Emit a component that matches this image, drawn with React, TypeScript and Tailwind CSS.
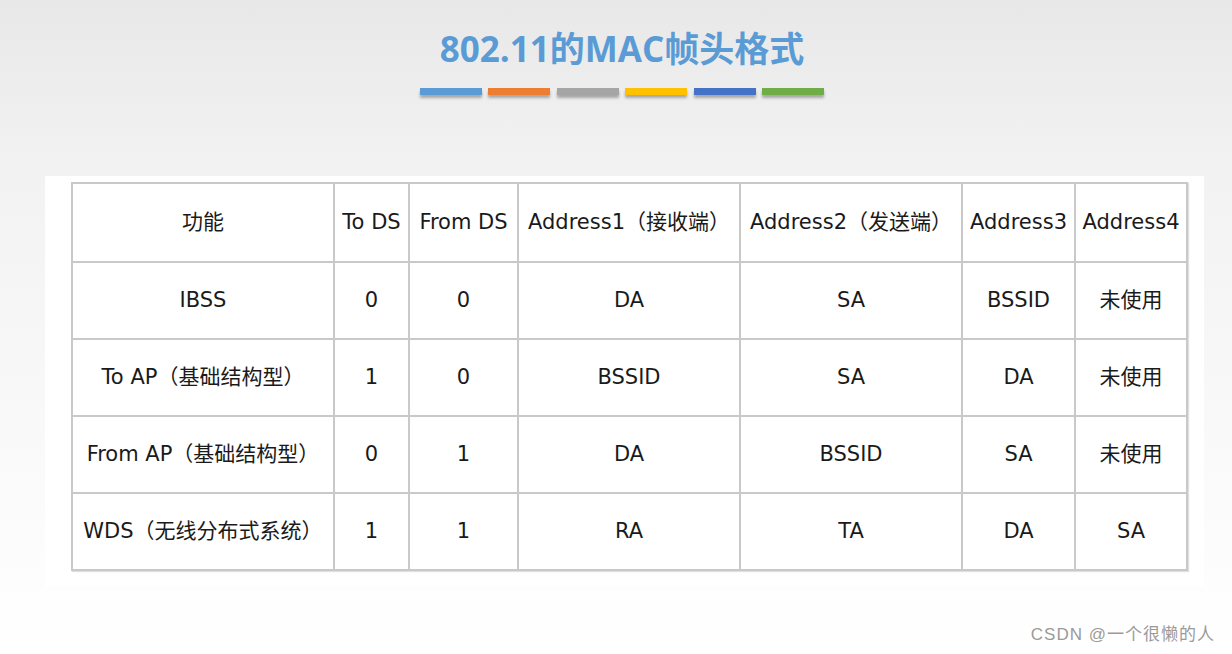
const bars = ["bg-[#5b9bd5]", "bg-[#ed7d31]", "bg-[#a5a5a5]", "bg-[#ffc000]", "bg-[#4472c4]", "bg-[#70ad47]"];

const headers = ["功能", "To DS", "From DS", "Address1（接收端）", "Address2（发送端）", "Address3", "Address4"];

const rows = [
  ["IBSS", "0", "0", "DA", "SA", "BSSID", "未使用"],
  ["To AP（基础结构型）", "1", "0", "BSSID", "SA", "DA", "未使用"],
  ["From AP（基础结构型）", "0", "1", "DA", "BSSID", "SA", "未使用"],
  ["WDS（无线分布式系统）", "1", "1", "RA", "TA", "DA", "SA"],
];

const colWidths = ["w-[262px]", "w-[75px]", "w-[109px]", "w-[222px]", "w-[222px]", "w-[113px]", "w-[112px]"];

export default function App() {
  return (
    <div className="relative h-[654px] w-[1232px] overflow-hidden bg-gradient-to-b from-[#e8e8e8] via-[#f2f2f2] via-25% to-white">
      {/* slide heading */}
      <div className="flex flex-col items-center pl-3 pt-[25px]">
        <h1 className="h-[48px] text-[35px] leading-[48px] font-bold text-[#5b9bd5] [font-family:'Open_Sans','Noto_Sans_CJK_SC',sans-serif]">
          802.11的MAC帧头格式
        </h1>
        <div className="mt-[15px] flex gap-[6.6px]">
          {bars.map((c) => (
            <div key={c} className={`h-[7px] w-[62px] ${c} shadow-[0_3px_3px_rgba(0,0,0,0.3)]`} />
          ))}
        </div>
      </div>

      <div className="ml-[45px] mt-[81px] w-[1159px] bg-white pb-[16px] pl-[26px] pr-[16px] pt-[6px]">
        <table className="w-[1117px] table-fixed border-collapse border-2 border-[#c9c9c9] text-[21px] text-[#1a1a1a] shadow-[1px_1px_1px_rgba(0,0,0,0.12)] [font-family:'DejaVu_Sans','Noto_Sans_CJK_SC',sans-serif]">
          <colgroup>
            {colWidths.map((w, i) => (
              <col key={i} className={w} />
            ))}
          </colgroup>
          <thead>
            <tr>
              {headers.map((h) => (
                <th key={h} className="h-[79px] border-2 border-[#c9c9c9] p-0 text-center font-normal whitespace-nowrap">
                  {h}
                </th>
              ))}
            </tr>
          </thead>
          <tbody>
            {rows.map((r, i) => (
              <tr key={i}>
                {r.map((cell, j) => (
                  <td key={j} className="h-[77px] border-2 border-[#c9c9c9] p-0 text-center whitespace-nowrap">
                    {cell}
                  </td>
                ))}
              </tr>
            ))}
          </tbody>
        </table>
      </div>

      <span className="absolute bottom-[7px] right-[17px] text-[17px] tracking-[1px] text-[#9a9a9a] [font-family:'Liberation_Sans','Noto_Sans_CJK_SC',sans-serif]">
        CSDN @一个很懒的人
      </span>
    </div>
  );
}
